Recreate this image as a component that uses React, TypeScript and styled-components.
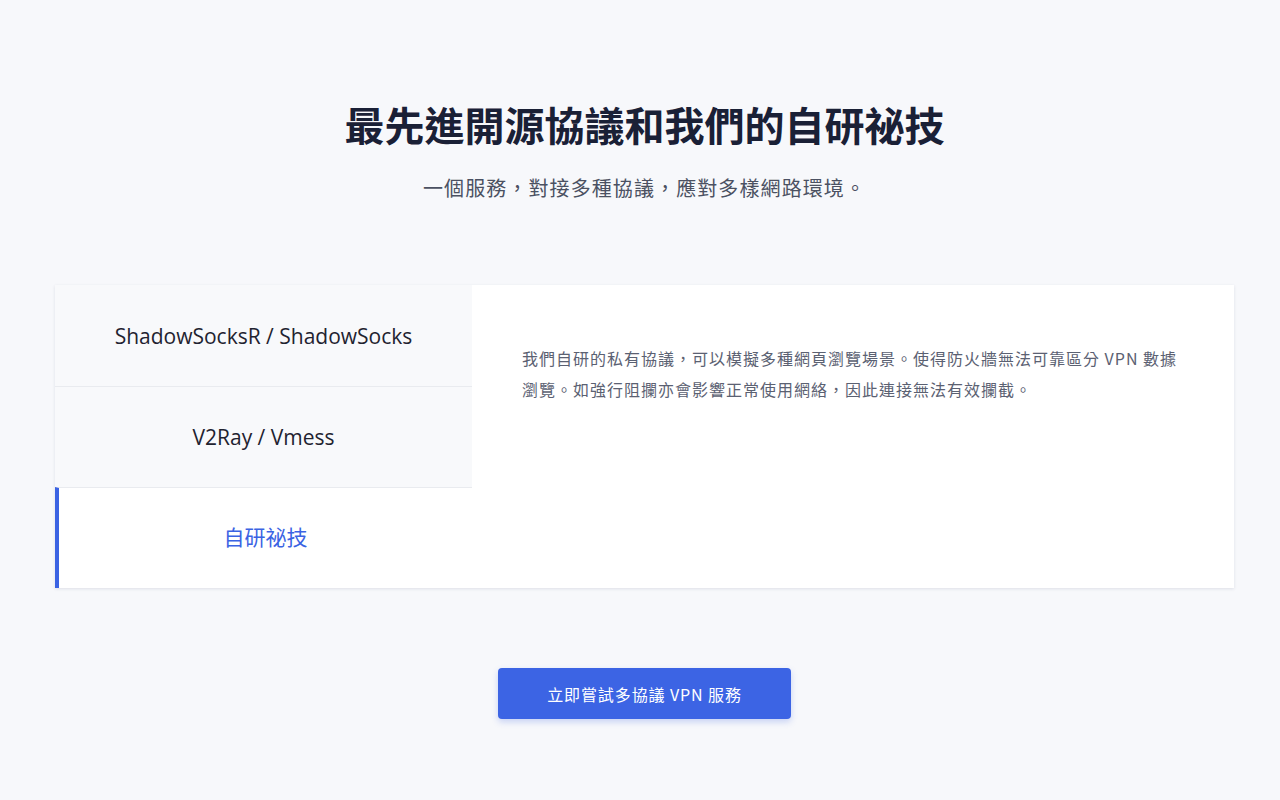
import React, { useState } from 'react'
import styled, { createGlobalStyle } from 'styled-components'

const GlobalStyle = createGlobalStyle`
  html, body {
    margin: 0;
    padding: 0;
    background: #f7f8fb;
  }
  body {
    font-family: "Open Sans", "Noto Sans CJK TC", sans-serif;
  }
`

const tabs = [
  {
    key: 'ssr',
    label: 'ShadowSocksR / ShadowSocks',
    text: 'ShadowSocksR 及 ShadowSocks 協議輕量快速，適合大部分日常使用場景。',
  },
  {
    key: 'v2ray',
    label: 'V2Ray / Vmess',
    text: 'V2Ray 及 Vmess 協議靈活多變，可偽裝成多種常見流量。',
  },
  {
    key: 'own',
    label: '自研祕技',
    text: '我們自研的私有協議，可以模擬多種網頁瀏覽場景。使得防火牆無法可靠區分 VPN 數據瀏覽。如強行阻攔亦會影響正常使用網絡，因此連接無法有效攔截。',
  },
]

const App = () => {
  const [active, setActive] = useState('own')
  const current = tabs.find((t) => t.key === active)!
  return (
    <Page>
      <GlobalStyle />
      <Header>
        <Title>最先進開源協議和我們的自研祕技</Title>
        <Subtitle>一個服務，對接多種協議，應對多樣網路環境。</Subtitle>
      </Header>
      <Card>
        <TabList>
          {tabs.map((t) => (
            <Tab key={t.key} active={t.key === active} onClick={() => setActive(t.key)}>
              {t.label}
            </Tab>
          ))}
        </TabList>
        <Panel>
          <PanelText>{current.text}</PanelText>
        </Panel>
      </Card>
      <Actions>
        <CtaButton>立即嘗試多協議 VPN 服務</CtaButton>
      </Actions>
    </Page>
  )
}

const Page = styled.div`
  min-height: 800px;
  padding: 95px 46px 0 55px;
  box-sizing: border-box;
`

const Header = styled.div`
  display: flex;
  flex-direction: column;
  align-items: center;
`

const Title = styled.h1`
  margin: 0;
  font-family: "Noto Sans CJK TC", sans-serif;
  font-size: 40px;
  line-height: 58px;
  font-weight: 700;
  color: #1a2036;
`

const Subtitle = styled.p`
  margin: 23px 0 0;
  font-family: "Noto Sans CJK TC", sans-serif;
  font-size: 20px;
  line-height: 24px;
  letter-spacing: 1.1px;
  color: #4b5162;
`

const Card = styled.div`
  margin-top: 85px;
  display: flex;
  background: #fff;
  box-shadow: 0 1px 3px rgba(40, 50, 90, 0.12);
`

const TabList = styled.div`
  width: 417px;
  flex-shrink: 0;
  display: flex;
  flex-direction: column;
`

const Tab = styled.div<{ active: boolean }>`
  height: 101px;
  display: flex;
  align-items: center;
  justify-content: center;
  box-sizing: border-box;
  cursor: pointer;
  font-family: "Open Sans", "Noto Sans CJK TC", sans-serif;
  font-size: 21px;
  color: ${(p) => (p.active ? '#3b63e3' : '#1f2330')};
  background: ${(p) => (p.active ? '#fff' : '#f8f9fb')};
  border-left: ${(p) => (p.active ? '4px solid #3b63e3' : 'none')};
  border-top: 1px solid #e9ebef;
  padding-bottom: ${(p) => (p.active ? '4px' : '0')};
  &:first-child {
    border-top: none;
  }
`

const Panel = styled.div`
  flex: 1;
  padding: 58px 50px 0 50px;
`

const PanelText = styled.p`
  margin: 0;
  font-family: "Noto Sans CJK TC", sans-serif;
  font-size: 16px;
  line-height: 31px;
  letter-spacing: 1px;
  color: #5b6172;
`

const Actions = styled.div`
  display: flex;
  justify-content: center;
  margin-top: 80px;
`

const CtaButton = styled.button`
  width: 293px;
  height: 51px;
  border: none;
  border-radius: 4px;
  background: #3c64e4;
  color: #fff;
  font-family: "Noto Sans CJK TC", sans-serif;
  font-size: 16px;
  letter-spacing: 0.9px;
  box-shadow: 0 3px 6px rgba(60, 100, 228, 0.25);
  cursor: pointer;
`

export default App
